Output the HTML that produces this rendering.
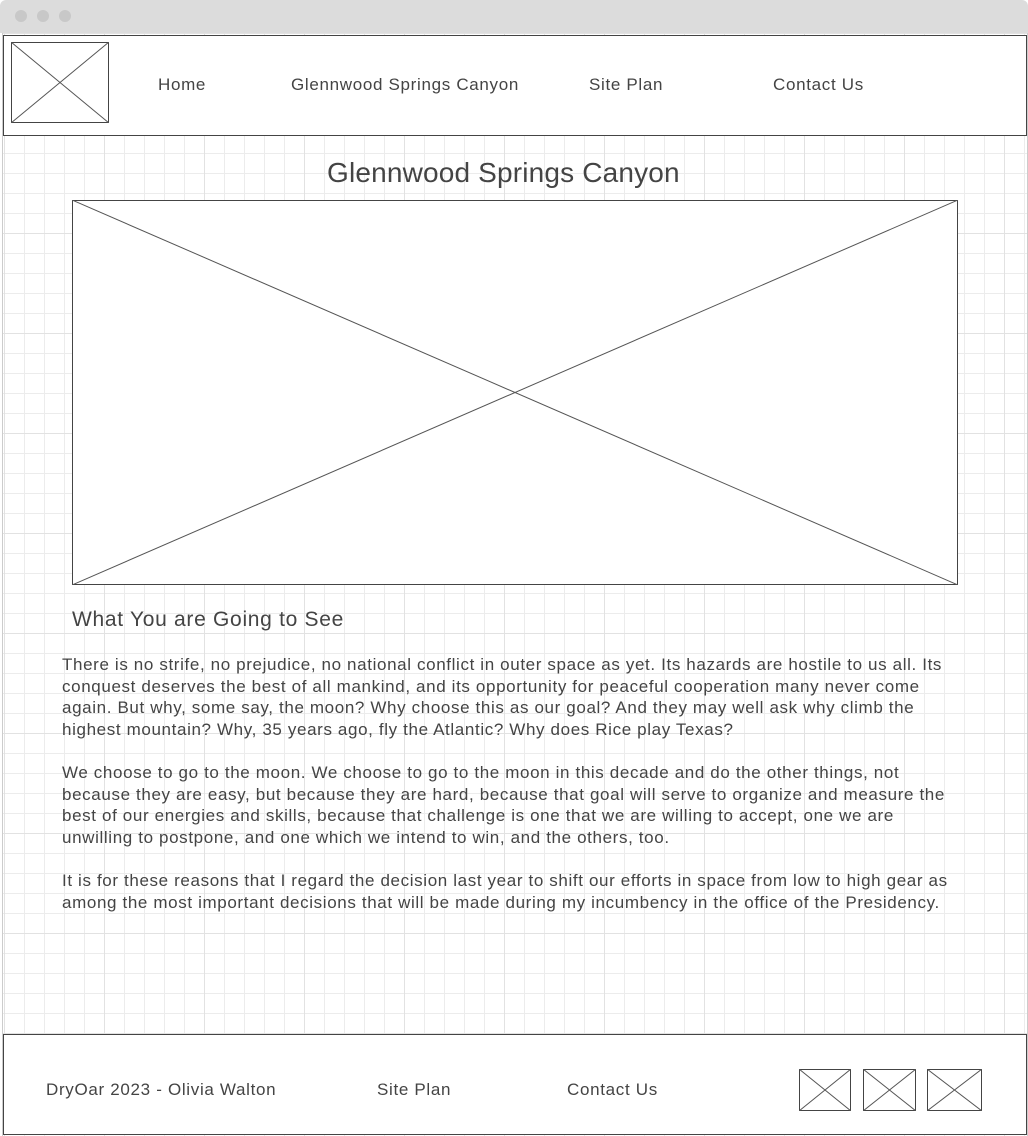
<!DOCTYPE html>
<html><head><meta charset="utf-8"><style>
*{margin:0;padding:0;box-sizing:border-box}
body{width:1028px;height:1136px;background:#fff;position:relative;overflow:hidden;font-family:"Liberation Sans",Arial,sans-serif;color:#444}
.bar{position:absolute;left:0;top:0;width:1028px;height:33px;background:#dcdcdc;border-radius:6px 6px 0 0}
.dot{position:absolute;top:10px;width:12px;height:12px;border-radius:50%;background:#c8c8c8}
.page{position:absolute;left:2px;top:33px;width:1026px;height:1103px;border-left:1px solid #ccc;border-right:1px solid #ccc;
background-color:#fff;
background-image:
linear-gradient(to right,#e2e2e2 1px,transparent 1px),
linear-gradient(to bottom,#e2e2e2 1px,transparent 1px),
linear-gradient(to right,#ececec 1px,transparent 1px),
linear-gradient(to bottom,#ececec 1px,transparent 1px);
background-size:100px 100px,100px 100px,20px 20px,20px 20px}
.box{position:absolute;background:#fff;border:1px solid #444}
.ph{position:absolute;background:#fff}
.t{position:absolute;white-space:nowrap}
.nav{font-size:17px;top:75px;letter-spacing:0.68px}
p{position:absolute;left:62px;width:900px;font-size:17px;line-height:21.6px;color:#444;letter-spacing:0.63px}
</style></head><body>
<div class="bar"><div class="dot" style="left:15px"></div><div class="dot" style="left:37px"></div><div class="dot" style="left:59px"></div></div>
<div class="page" style="background-position:1px 0,1px 0,1px 0,1px 0"></div>
<div class="box" style="left:3px;top:35px;width:1024px;height:101px"></div>
<svg class="ph" style="left:11px;top:42px" width="98" height="81"><rect x="0.5" y="0.5" width="97" height="80" fill="#fff" stroke="#444"/><path d="M0 0L98 81M98 0L0 81" stroke="#555" stroke-width="1"/></svg>
<div class="t nav" style="left:158px">Home</div>
<div class="t nav" style="left:291px">Glennwood Springs Canyon</div>
<div class="t nav" style="left:589px">Site Plan</div>
<div class="t nav" style="left:773px">Contact Us</div>
<div class="t" style="left:327px;top:157px;font-size:28px;letter-spacing:0.17px">Glennwood Springs Canyon</div>
<svg class="ph" style="left:72px;top:200px" width="886" height="385"><rect x="0.5" y="0.5" width="885" height="384" fill="#fff" stroke="#444"/><path d="M0 0L886 385M886 0L0 385" stroke="#555" stroke-width="1"/></svg>
<div class="t" style="left:72px;top:608px;font-size:21px;letter-spacing:0.7px">What You are Going to See</div>
<p style="top:654px">There is no strife, no prejudice, no national conflict in outer space as yet. Its hazards are hostile to us all. Its conquest deserves the best of all mankind, and its opportunity for peaceful cooperation many never come again. But why, some say, the moon? Why choose this as our goal? And they may well ask why climb the highest mountain? Why, 35 years ago, fly the Atlantic? Why does Rice play Texas?</p>
<p style="top:762px">We choose to go to the moon. We choose to go to the moon in this decade and do the other things, not because they are easy, but because they are hard, because that goal will serve to organize and measure the best of our energies and skills, because that challenge is one that we are willing to accept, one we are unwilling to postpone, and one which we intend to win, and the others, too.</p>
<p style="top:870px">It is for these reasons that I regard the decision last year to shift our efforts in space from low to high gear as among the most important decisions that will be made during my incumbency in the office of the Presidency.</p>
<div class="box" style="left:3px;top:1034px;width:1024px;height:101px"></div>
<div class="t nav" style="left:46px;top:1080px">DryOar 2023 - Olivia Walton</div>
<div class="t nav" style="left:377px;top:1080px">Site Plan</div>
<div class="t nav" style="left:567px;top:1080px">Contact Us</div>
<svg class="ph" style="left:799px;top:1069px" width="52" height="42"><rect x="0.5" y="0.5" width="51" height="41" fill="#fff" stroke="#444"/><path d="M0 0L52 42M52 0L0 42" stroke="#555"/></svg>
<svg class="ph" style="left:863px;top:1069px" width="53" height="42"><rect x="0.5" y="0.5" width="52" height="41" fill="#fff" stroke="#444"/><path d="M0 0L53 42M53 0L0 42" stroke="#555"/></svg>
<svg class="ph" style="left:927px;top:1069px" width="55" height="42"><rect x="0.5" y="0.5" width="54" height="41" fill="#fff" stroke="#444"/><path d="M0 0L55 42M55 0L0 42" stroke="#555"/></svg>
</body></html>
